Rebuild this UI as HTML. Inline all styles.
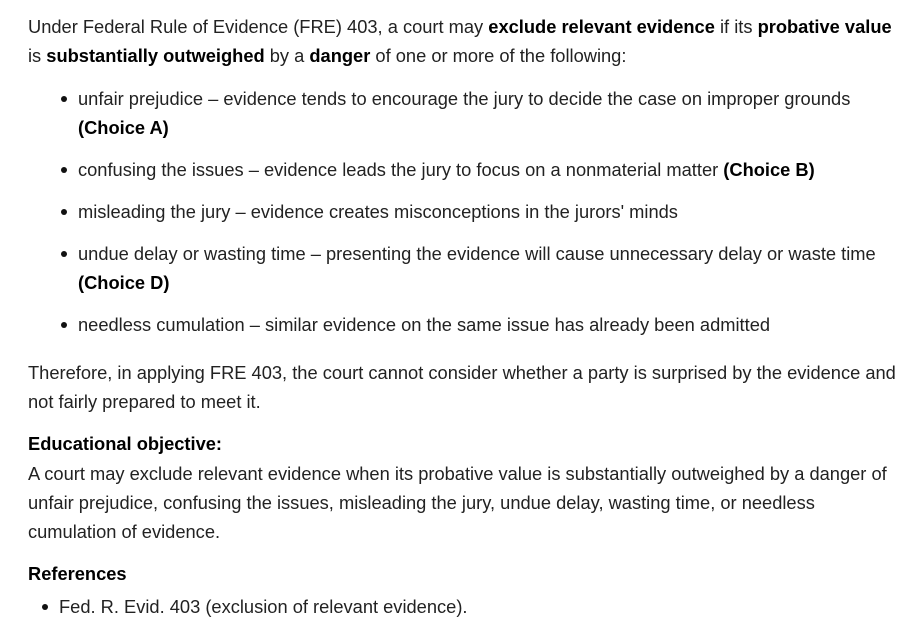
<!DOCTYPE html>
<html><head><meta charset="utf-8"><style>
body{margin:0;background:#fff;width:905px;height:642px;overflow:hidden;font-family:"Liberation Sans",Arial,sans-serif;font-size:18.3px;color:#222;}
.l{position:absolute;white-space:nowrap;line-height:29px;height:29px;}
b{color:#000;font-weight:bold}
.d{position:absolute;width:6px;height:6px;border-radius:50%;background:#111;}
</style></head><body>
<div class="l" style="left:28px;top:12px">Under Federal Rule of Evidence (FRE) 403, a court may <b>exclude relevant evidence</b> if its <b>probative value</b></div>
<div class="l" style="left:28px;top:41px">is <b>substantially outweighed</b> by a <b>danger</b> of one or more of the following:</div>

<div class="d" style="left:61px;top:96px"></div>
<div class="l" style="left:78px;top:84px">unfair prejudice – evidence tends to encourage the jury to decide the case on improper grounds</div>
<div class="l" style="left:78px;top:113px"><b>(Choice A)</b></div>
<div class="d" style="left:61px;top:167px"></div>
<div class="l" style="left:78px;top:155px">confusing the issues – evidence leads the jury to focus on a nonmaterial matter <b>(Choice B)</b></div>
<div class="d" style="left:61px;top:209px"></div>
<div class="l" style="left:78px;top:197px">misleading the jury – evidence creates misconceptions in the jurors' minds</div>
<div class="d" style="left:61px;top:251px"></div>
<div class="l" style="left:78px;top:239px">undue delay or wasting time – presenting the evidence will cause unnecessary delay or waste time</div>
<div class="l" style="left:78px;top:268px"><b>(Choice D)</b></div>
<div class="d" style="left:61px;top:322px"></div>
<div class="l" style="left:78px;top:310px">needless cumulation – similar evidence on the same issue has already been admitted</div>

<div class="l" style="left:28px;top:358px">Therefore, in applying FRE 403, the court cannot consider whether a party is surprised by the evidence and</div>
<div class="l" style="left:28px;top:387px">not fairly prepared to meet it.</div>

<div class="l" style="left:28px;top:429px"><b>Educational objective:</b></div>
<div class="l" style="left:28px;top:459px">A court may exclude relevant evidence when its probative value is substantially outweighed by a danger of</div>
<div class="l" style="left:28px;top:488px">unfair prejudice, confusing the issues, misleading the jury, undue delay, wasting time, or needless</div>
<div class="l" style="left:28px;top:517px">cumulation of evidence.</div>

<div class="l" style="left:28px;top:559px"><b>References</b></div>
<div class="d" style="left:42px;top:604px"></div>
<div class="l" style="left:59px;top:592px">Fed. R. Evid. 403 (exclusion of relevant evidence).</div>
</body></html>
